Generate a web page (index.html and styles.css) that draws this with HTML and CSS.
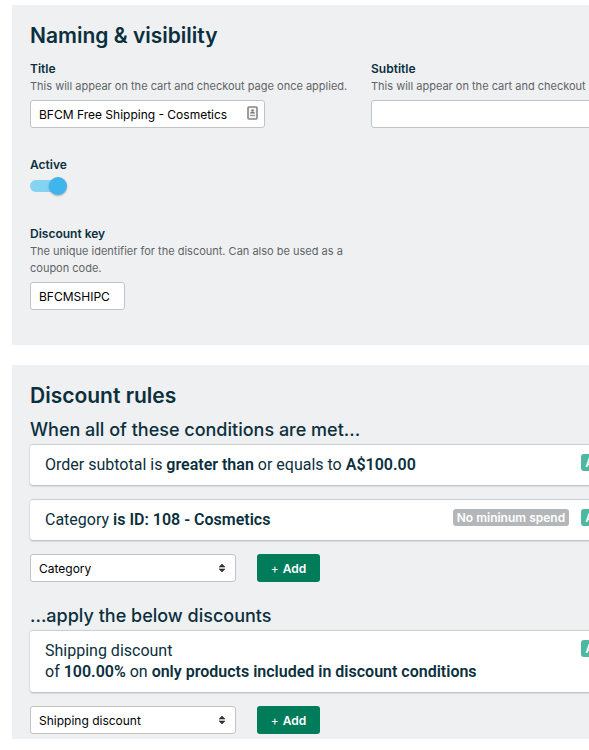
FILE: index.html
```
<!DOCTYPE html>
<html lang="en">
<head>
    <meta charset="UTF-8">
    <meta name="viewport" content="width=device-width, initial-scale=1.0">
    <title>Edit discount</title>
    <link rel="stylesheet" href="styles.css">
</head>
<body>
    <main class="page">
        <section class="panel naming">
            <h2>Naming &amp; visibility</h2>
            <div class="fields">
                <div class="field">
                    <label for="title">Title</label>
                    <p class="help">This will appear on the cart and checkout page once applied.</p>
                    <div class="input-wrap">
                        <input class="text-input" type="text" id="title" value="BFCM Free Shipping - Cosmetics">
                        <svg class="autofill" width="11" height="14" viewBox="0 0 11 14" aria-hidden="true">
                            <rect x="1" y="1" width="9" height="12" rx="1" fill="#f4f4f4" stroke="#858585" stroke-width="1.6"/>
                            <circle cx="5.5" cy="4.4" r="1.2" fill="#777"/>
                            <path d="M3 7.6c0-2.6 5-2.6 5 0z" fill="#777"/>
                            <path d="M3 9.5h5" stroke="#999" stroke-width="1.2"/>
                        </svg>
                    </div>
                </div>
                <div class="field">
                    <label for="subtitle">Subtitle</label>
                    <p class="help">This will appear on the cart and checkout page once applied.</p>
                    <input class="text-input" type="text" id="subtitle">
                </div>
                <div class="field full">
                    <label for="active">Active</label>
                    <input class="toggle" type="checkbox" id="active" checked>
                </div>
                <div class="field">
                    <label for="key">Discount key</label>
                    <p class="help">The unique identifier for the discount. Can also be used as a coupon code.</p>
                    <input class="text-input short" type="text" id="key" value="BFCMSHIPC">
                </div>
            </div>
        </section>

        <section class="panel rules">
            <h2>Discount rules</h2>

            <h3>When all of these conditions are met...</h3>
            <div class="card">
                <p>Order subtotal is <strong>greater than</strong> or equals to <strong>A$100.00</strong></p>
                <span class="badge green">Active</span>
            </div>
            <div class="card">
                <p>Category <strong>is ID: 108 - Cosmetics</strong></p>
                <span class="badge grey">No mininum spend</span>
                <span class="badge green">Active</span>
            </div>
            <div class="add-row">
                <select class="select" aria-label="Condition type">
                    <option>Category</option>
                </select>
                <button class="add" type="button"><span class="plus">+</span>Add</button>
            </div>

            <h3>...apply the below discounts</h3>
            <div class="card">
                <p>Shipping discount<br>of <strong>100.00%</strong> on <strong>only products included in discount conditions</strong></p>
                <span class="badge green">Active</span>
            </div>
            <div class="add-row">
                <select class="select" aria-label="Discount type">
                    <option>Shipping discount</option>
                </select>
                <button class="add" type="button"><span class="plus">+</span>Add</button>
            </div>
        </section>
    </main>
</body>
</html>
```
FILE: styles.css
```
* {
    box-sizing: border-box;
}

body {
    margin: 0;
    background: #fff;
    color: #0b2f3d;
    font-family: Inter, "Liberation Sans", sans-serif;
    font-size: 16px;
    overflow-x: hidden;
}

/* Wider than small windows, the rest is cut off on the right */
.page {
    min-width: 659px;
    padding: 5px 0 0 12px;
}

.panel {
    padding: 15px 18px;
    background: #eff0f2;
}

.naming {
    margin-bottom: 20px;
    padding-bottom: 35px;
}

.rules {
    padding-bottom: 5px;
}

h2,
h3,
p {
    margin: 0;
}

h2 {
    margin-bottom: 4px;
    font-size: 21px;
    font-weight: 600;
    line-height: 32px;
}

h3 {
    font-size: 18px;
    font-weight: 500;
    line-height: 28px;
}

/* Fields */
.fields {
    display: grid;
    grid-template-columns: repeat(2, minmax(325px, 1fr));
    gap: 28px 16px;
    padding-top: 4px;
}

.full {
    grid-column: 1 / -1;
}

.field label {
    display: block;
    font-size: 12px;
    font-weight: 600;
    line-height: 18px;
}

.help {
    margin-bottom: 5px;
    color: #606468;
    font-size: 11px;
    line-height: 17px;
}

.input-wrap {
    position: relative;
    width: 235px;
}

.text-input,
.select {
    display: block;
    width: 100%;
    height: 28px;
    padding: 0 8px;
    border: 1px solid #c3c3c3;
    border-radius: 3px;
    background: #fff;
    color: #000;
    font-family: inherit;
    font-size: 12px;
}

.short {
    width: 95px;
}

.autofill {
    position: absolute;
    top: 6px;
    right: 7px;
}

.toggle {
    display: block;
    position: relative;
    width: 37px;
    height: 20px;
    margin: 3px 0 0;
    appearance: none;
    cursor: pointer;
}

.toggle::before {
    content: '';
    position: absolute;
    top: 3px;
    left: 0;
    width: 34px;
    height: 12px;
    border-radius: 6px;
    background: #c3c8cc;
}

.toggle::after {
    content: '';
    position: absolute;
    top: 0;
    left: 0;
    width: 18px;
    height: 18px;
    border-radius: 50%;
    background: #fff;
    box-shadow: 0 1px 2px rgba(0,0,0,0.3);
}

.toggle:checked::before {
    background: #85d3f3;
}

.toggle:checked::after {
    left: 19px;
    background: #3eb5ec;
}

/* Rules */
.card {
    display: flex;
    align-items: flex-start;
    gap: 12px;
    margin-bottom: 14px;
    padding: 9px 15px 10px;
    border-top: 1px solid #cdd0d2;
    border-radius: 3px;
    background: #fff;
    box-shadow: 0 1px 2px rgba(0,0,0,0.25);
}

.card p {
    flex: 1;
    font-family: Roboto, "Liberation Sans", sans-serif;
    line-height: 21px;
}

.card strong {
    font-weight: 600;
}

.badge {
    padding: 0 4px;
    border-radius: 3px;
    color: #fff;
    font-size: 12px;
    font-weight: 600;
    line-height: 17px;
}

.green {
    background: #4db89e;
}

.grey {
    background: #b3b7b9;
}

.add-row {
    display: flex;
    gap: 21px;
}

.add-row + h3 {
    margin-top: 20px;
}

.select {
    width: 206px;
    appearance: none;
    background: #fff url("data:image/svg+xml,%3Csvg xmlns='http://www.w3.org/2000/svg' width='8' height='10'%3E%3Cpath d='M1 4L4 1l3 3zM1 6l3 3 3-3z' fill='%23333' stroke='%23333' stroke-linejoin='round' stroke-width='.6'/%3E%3C/svg%3E") no-repeat right 9px center;
}

.add {
    width: 63px;
    height: 28px;
    padding: 0;
    border: none;
    border-radius: 3px;
    background: #007c5b;
    color: #fff;
    font-family: inherit;
    font-size: 12px;
    font-weight: 600;
    cursor: pointer;
}

.plus {
    margin-right: 4px;
    font-weight: 400;
}
```
